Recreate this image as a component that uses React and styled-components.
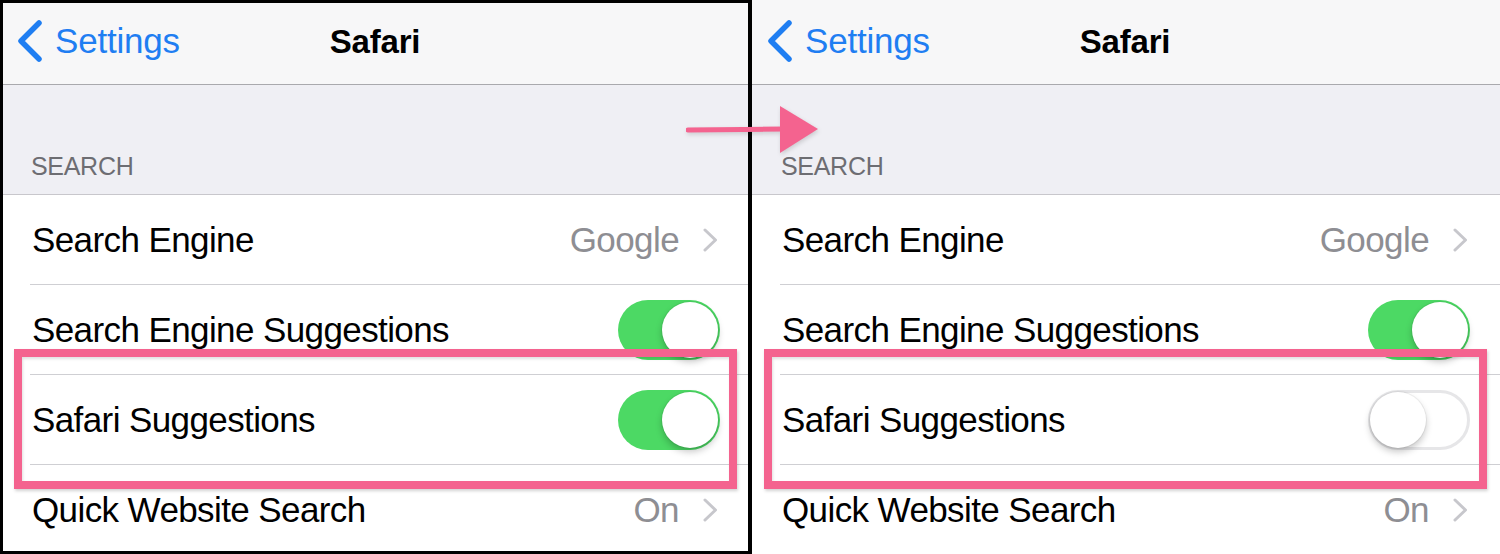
import React from "react";
import styled, { createGlobalStyle } from "styled-components";

const Global = createGlobalStyle`
  html, body { margin: 0; padding: 0; background: #fff; }
  body { width: 1500px; height: 554px; overflow: hidden; font-family: "Liberation Sans", Arial, sans-serif; }
`;

const Stage = styled.div`
  position: relative;
  display: flex;
  width: 1500px;
  height: 554px;
  overflow: hidden;
`;

const Panel = styled.div`
  position: relative;
  width: 750px;
  height: 554px;
  display: flex;
  flex-direction: column;
  background: #fff;
  flex-shrink: 0;
  ${(p) =>
    p.$framed &&
    `
    &::after {
      content: "";
      position: absolute;
      top: 0; left: 0; bottom: 0; right: -2px;
      border: 3px solid #000;
      border-right-width: 4px;
      z-index: 5;
      pointer-events: none;
    }
  `}
`;

const NavBar = styled.div`
  height: 84px;
  flex-shrink: 0;
  background: #f7f7f8;
  border-bottom: 1px solid #a9a9ad;
  display: grid;
  grid-template-columns: 1fr auto 1fr;
  align-items: center;
`;

const Back = styled.div`
  display: flex;
  align-items: center;
  gap: 11px;
  padding-left: 16px;
  color: #1f7ef2;
  font-size: 35px;
  letter-spacing: -0.2px;
  margin-top: -2px;
`;

const Title = styled.div`
  font-weight: 700;
  font-size: 33px;
  color: #000;
  letter-spacing: -0.2px;
`;

const GroupHeader = styled.div`
  height: 110px;
  flex-shrink: 0;
  background: #efeff4;
  border-bottom: 1px solid #c8c7cc;
  display: flex;
  align-items: flex-end;
  padding: 0 0 13px 31px;
  box-sizing: border-box;
  color: #6d6d72;
  font-size: 25px;
  letter-spacing: -0.3px;
`;

const Row = styled.div`
  height: 90px;
  flex-shrink: 0;
  padding-left: 30px;
  display: flex;
  box-sizing: border-box;
`;

const RowInner = styled.div`
  flex: 1;
  display: flex;
  align-items: center;
  justify-content: space-between;
  padding: 0 30px 0 2px;
  border-bottom: ${(p) => (p.$last ? "none" : "1px solid #cfcfd3")};
`;

const Label = styled.span`
  font-size: 35px;
  color: #000;
  letter-spacing: -0.6px;
`;

const Detail = styled.div`
  display: flex;
  align-items: center;
  gap: 24px;
  color: #8e8e93;
  font-size: 35px;
  letter-spacing: -0.6px;
  margin-right: 2px;
`;

const Track = styled.div`
  position: relative;
  width: 102px;
  height: 60px;
  border-radius: 30px;
  box-sizing: border-box;
  background: ${(p) => (p.$on ? "#4cd964" : "#fff")};
  border: ${(p) => (p.$on ? "none" : "3px solid #e6e6e8")};
  display: flex;
  align-items: center;
  justify-content: ${(p) => (p.$on ? "flex-end" : "flex-start")};
  padding: ${(p) => (p.$on ? "0 2px" : "0")};
`;

const Knob = styled.div`
  width: 56px;
  height: 56px;
  border-radius: 50%;
  background: #fff;
  margin-left: ${(p) => (p.$on ? "0" : "-1px")};
  box-shadow: 0 4px 7px rgba(0, 0, 0, 0.22), 0 0 0 1px rgba(0, 0, 0, 0.05);
`;

const Highlight = styled.div`
  position: absolute;
  left: 14px;
  top: 349px;
  width: 723px;
  height: 140px;
  box-sizing: border-box;
  border: 8px solid #f4638f;
  box-shadow: 1px 2px 3px rgba(0, 0, 0, 0.18), inset 1px 2px 3px rgba(0, 0, 0, 0.12);
  z-index: 3;
  pointer-events: none;
`;

const ArrowWrap = styled.div`
  position: absolute;
  left: 686px;
  top: 104px;
  width: 136px;
  height: 52px;
  z-index: 10;
  filter: drop-shadow(1px 2px 2px rgba(0, 0, 0, 0.15));
`;

const Chevron = () => (
  <svg width="15" height="24" viewBox="0 0 15 24">
    <path d="M2 2 L12.5 12 L2 22" fill="none" stroke="#c7c7cc" strokeWidth="3" strokeLinecap="round" strokeLinejoin="round" />
  </svg>
);

const BackChevron = () => (
  <svg width="28" height="44" viewBox="0 0 28 44">
    <path d="M23 4 L5 22 L23 40" fill="none" stroke="#1f7ef2" strokeWidth="5.5" strokeLinecap="round" strokeLinejoin="round" />
  </svg>
);

const Toggle = ({ on }) => (
  <Track $on={on}>
    <Knob $on={on} />
  </Track>
);

const Screen = ({ framed, safariOn }) => (
  <Panel $framed={framed}>
    <NavBar>
      <Back>
        <BackChevron />
        <span>Settings</span>
      </Back>
      <Title>Safari</Title>
      <div />
    </NavBar>
    <GroupHeader>SEARCH</GroupHeader>
    <Row>
      <RowInner>
        <Label>Search Engine</Label>
        <Detail>
          Google
          <Chevron />
        </Detail>
      </RowInner>
    </Row>
    <Row>
      <RowInner>
        <Label>Search Engine Suggestions</Label>
        <Toggle on />
      </RowInner>
    </Row>
    <Row>
      <RowInner>
        <Label>Safari Suggestions</Label>
        <Toggle on={safariOn} />
      </RowInner>
    </Row>
    <Row>
      <RowInner $last>
        <Label>Quick Website Search</Label>
        <Detail>
          On
          <Chevron />
        </Detail>
      </RowInner>
    </Row>
    <Highlight />
  </Panel>
);

export default function App() {
  return (
    <Stage>
      <Global />
      <Screen framed safariOn />
      <Screen safariOn={false} />
      <ArrowWrap>
        <svg width="136" height="52" viewBox="0 0 136 52">
          <line x1="2" y1="26" x2="100" y2="25" stroke="#f4638f" strokeWidth="5" strokeLinecap="round" />
          <polygon points="94,2 132,25 94,49" fill="#f4638f" />
        </svg>
      </ArrowWrap>
    </Stage>
  );
}
